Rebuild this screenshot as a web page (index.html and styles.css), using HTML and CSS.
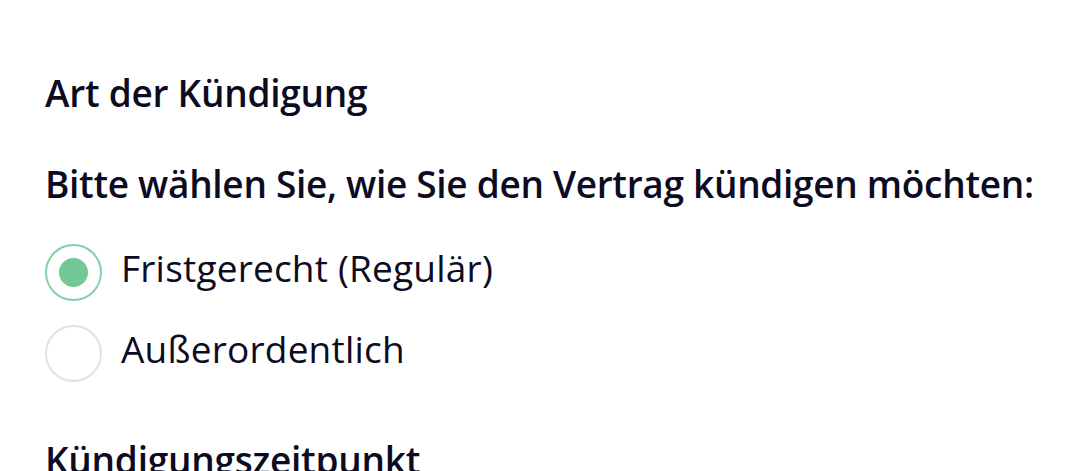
FILE: index.html
```html
<!DOCTYPE html>
<html lang="de">
<head>
<meta charset="utf-8">
<title>Art der Kündigung</title>
<link rel="stylesheet" href="styles.css">
</head>
<body>
<main class="page">
  <h2 class="section-title">Art der Kündigung</h2>
  <fieldset class="group">
    <legend class="question">Bitte wählen Sie, wie Sie den Vertrag kündigen möchten:</legend>
    <div class="options">
      <label class="option">
        <span class="radio radio--checked"><span class="dot"></span></span>
        <span class="option-label">Fristgerecht (Regulär)</span>
      </label>
      <label class="option">
        <span class="radio"></span>
        <span class="option-label">Außerordentlich</span>
      </label>
    </div>
  </fieldset>
  <h2 class="section-title section-title--next">Kündigungszeitpunkt</h2>
</main>
</body>
</html>
```

FILE: styles.css
```css
html, body {
  margin: 0;
  padding: 0;
  background: #ffffff;
}

body {
  font-family: "Open Sans", "Noto Sans", sans-serif;
  color: #0c0b1f;
  overflow: hidden;
}

.page {
  padding: 71px 0 0 45px;
}

.section-title {
  margin: 0;
  font-size: 37px;
  line-height: 44px;
  font-weight: 600;
  letter-spacing: -0.25px;
}

.group {
  border: 0;
  margin: 47px 0 0 0;
  padding: 0;
  min-width: 0;
}

.question {
  padding: 0;
  font-size: 37px;
  line-height: 44px;
  font-weight: 600;
  letter-spacing: -0.3px;
  white-space: nowrap;
}

.options {
  display: flex;
  flex-direction: column;
  gap: 24px;
  margin-top: 38px;
}

.option {
  display: flex;
  align-items: center;
  gap: 19px;
}

.radio {
  box-sizing: border-box;
  width: 57px;
  height: 57px;
  border-radius: 50%;
  border: 2px solid #e2e2e2;
  display: flex;
  align-items: center;
  justify-content: center;
  flex: none;
}

.radio--checked {
  border-color: #86cfa7;
}

.dot {
  width: 29px;
  height: 29px;
  border-radius: 50%;
  background: #73c995;
}

.option-label {
  font-size: 37px;
  line-height: 44px;
  padding-bottom: 9px;
  font-weight: 400;
  letter-spacing: 0.2px;
}

.section-title--next {
  margin-top: 56px;
}
```
